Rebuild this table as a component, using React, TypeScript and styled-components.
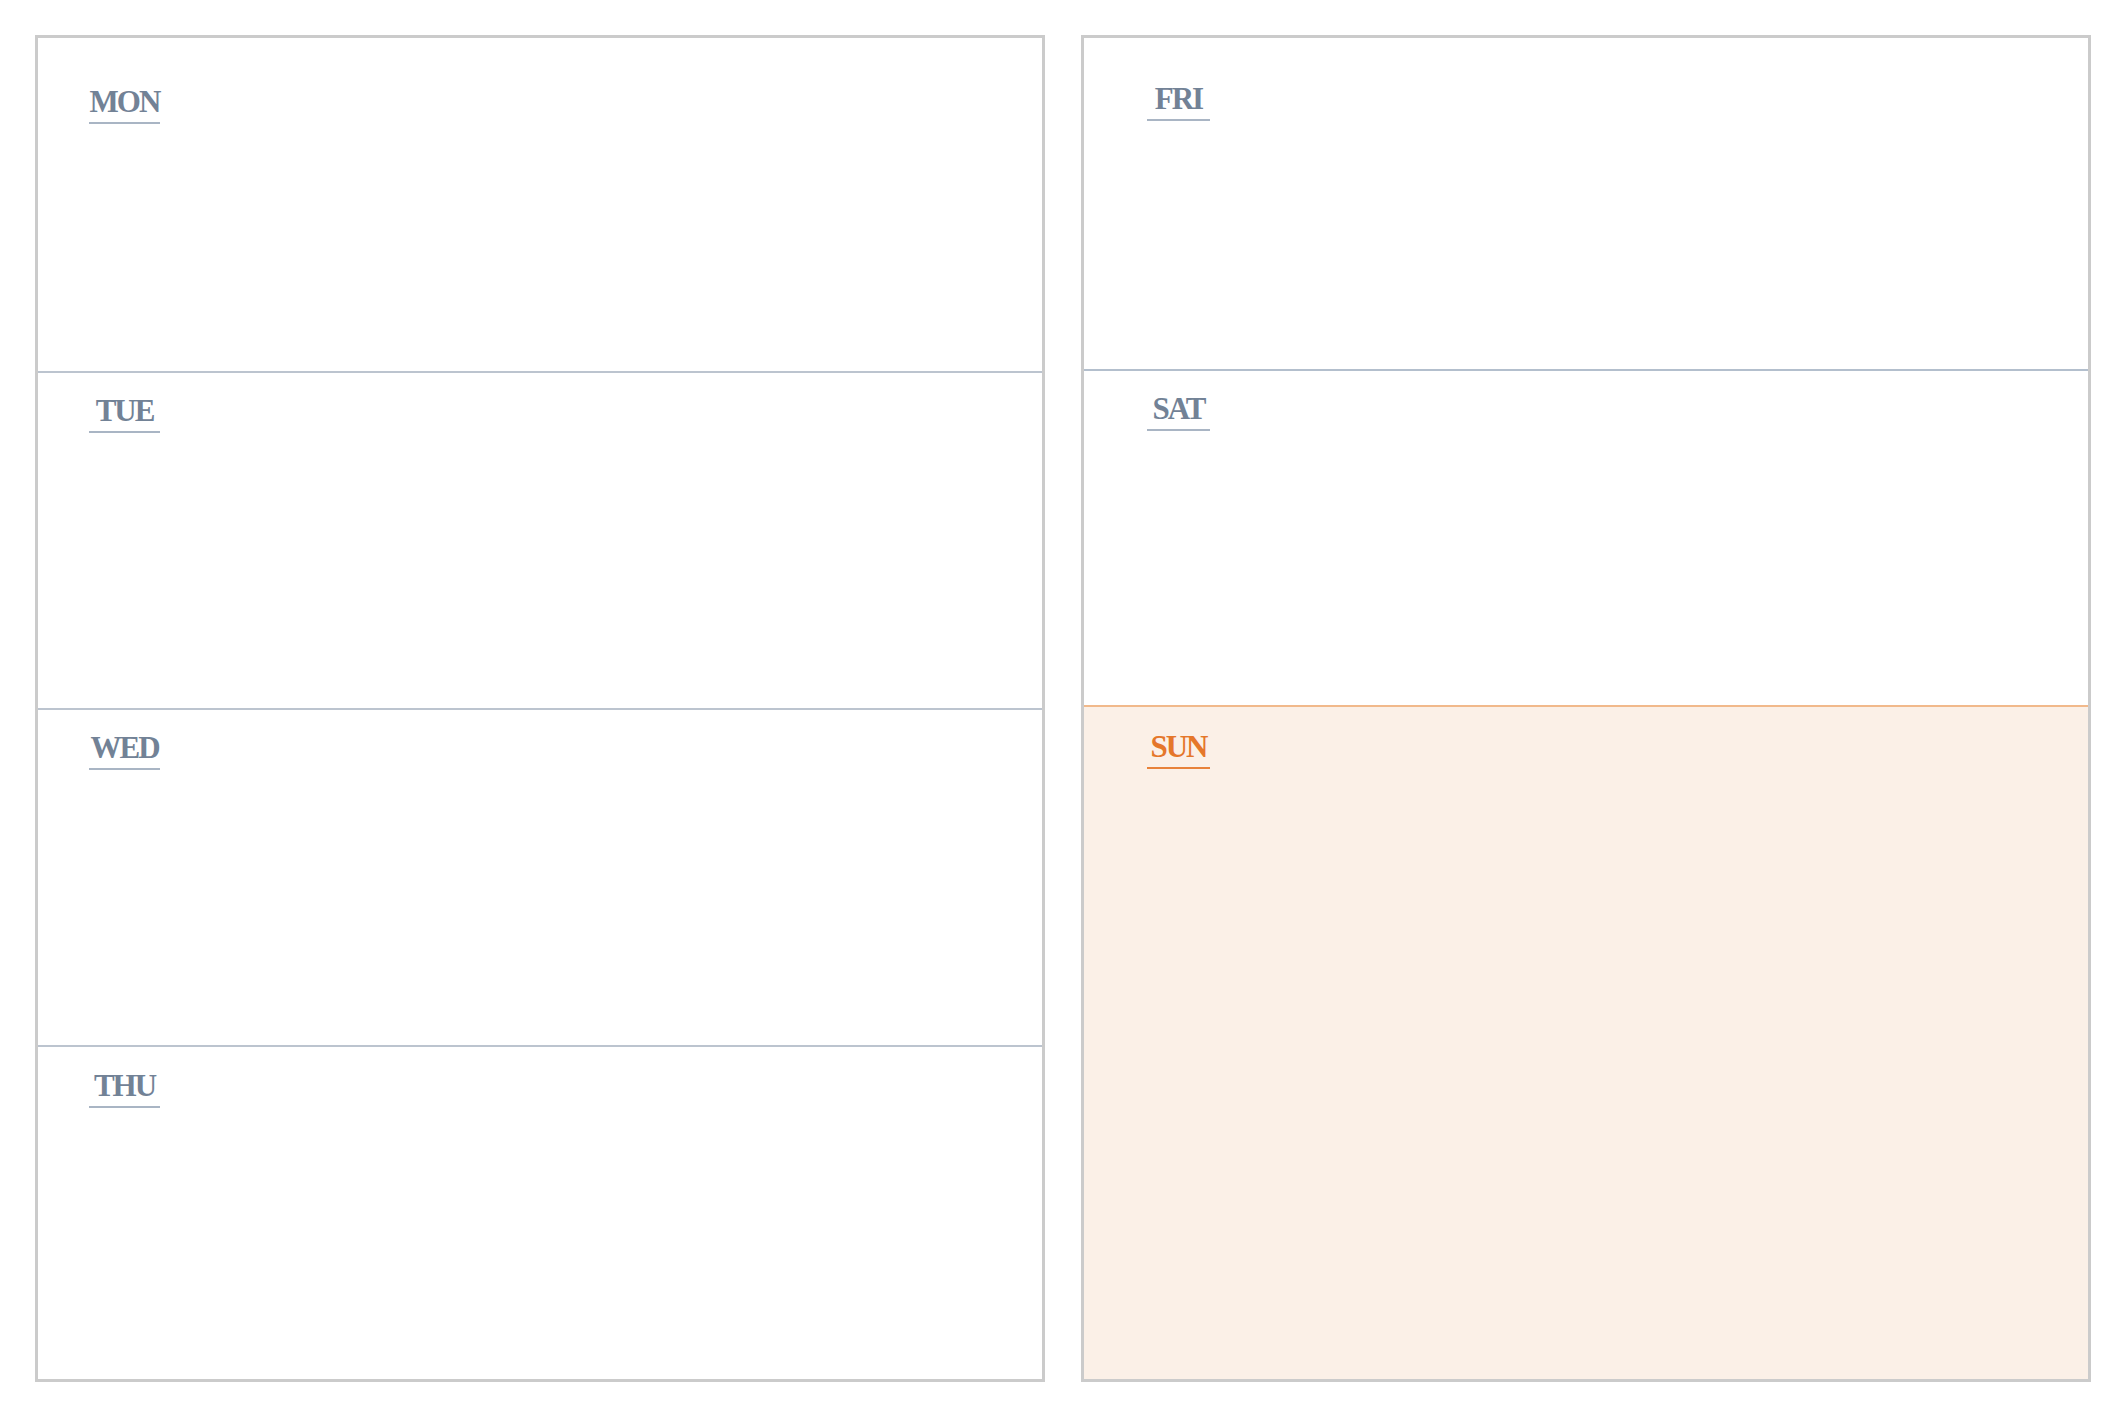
import React from "react";
import styled, { createGlobalStyle } from "styled-components";

const GlobalStyle = createGlobalStyle`
  html, body {
    margin: 0;
    padding: 0;
    background: #ffffff;
  }
  * {
    box-sizing: border-box;
  }
`;

const Page = styled.div`
  display: grid;
  grid-template-columns: 1fr 1fr;
  gap: 36px;
  width: 2126px;
  height: 1417px;
  padding: 35px;
  background: #ffffff;
`;

const Panel = styled.div<{ $rows: string }>`
  display: grid;
  grid-template-rows: ${(p) => p.$rows};
  border: 3px solid #cbcbcb;
  background: #ffffff;
  min-height: 0;
`;

const Row = styled.div<{ $top: number; $left: number; $divider?: string; $sunday?: boolean }>`
  min-height: 0;
  padding: ${(p) => p.$top}px 0 0 ${(p) => p.$left}px;
  background: ${(p) => (p.$sunday ? "#fbf0e7" : "transparent")};
  border-top: ${(p) => (p.$divider ? `2px solid ${p.$divider}` : "none")};
`;

const Label = styled.div<{ $width: number; $sunday?: boolean }>`
  display: flex;
  justify-content: center;
  width: ${(p) => p.$width}px;
  padding-bottom: 5px;
  border-bottom: 2px solid ${(p) => (p.$sunday ? "#e8823a" : "#a9b5c4")};
  font-family: "Liberation Serif", "Times New Roman", serif;
  font-weight: 700;
  font-size: 31px;
  line-height: 1;
  letter-spacing: -2px;
  color: ${(p) => (p.$sunday ? "#e5772a" : "#728296")};
`;

type Day = { name: string; top: number; divider?: string; sunday?: boolean };

const leftDays: Day[] = [
  { name: "MON", top: 48 },
  { name: "TUE", top: 22, divider: "#bcc4cf" },
  { name: "WED", top: 22, divider: "#bcc4cf" },
  { name: "THU", top: 23, divider: "#bcc4cf" },
];

const rightDays: Day[] = [
  { name: "FRI", top: 45 },
  { name: "SAT", top: 22, divider: "#b3bfcd" },
  { name: "SUN", top: 24, divider: "#f1b98b", sunday: true },
];

const Column: React.FC<{ days: Day[]; rows: string; left: number; width: number }> = (props) => (
  <Panel $rows={props.rows}>
    {props.days.map((d) => (
      <Row
        key={d.name}
        $top={d.top}
        $left={props.left}
        $divider={d.divider}
        $sunday={d.sunday}
      >
        <Label $width={props.width} $sunday={d.sunday}>
          {d.name}
        </Label>
      </Row>
    ))}
  </Panel>
);

export default function App() {
  return (
    <>
      <GlobalStyle />
      <Page>
        <Column days={leftDays} rows="333fr 337fr 337fr 334fr" left={51} width={71} />
        <Column days={rightDays} rows="331fr 336fr 674fr" left={63} width={63} />
      </Page>
    </>
  );
}
